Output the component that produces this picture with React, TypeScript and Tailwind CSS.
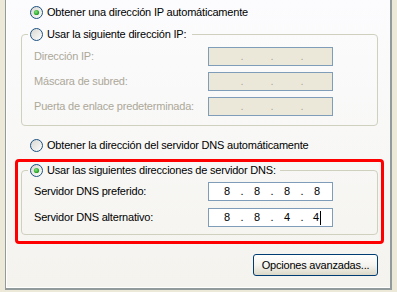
import React from "react";

function Radio({ checked }: { checked?: boolean }) {
  return (
    <svg width="13" height="13" viewBox="0 0 13 13" className="shrink-0">
      <defs>
        <linearGradient id="radioFill" x1="0" y1="0" x2="1" y2="1">
          <stop offset="0" stopColor="#d6d5cf" />
          <stop offset="1" stopColor="#ffffff" />
        </linearGradient>
        <radialGradient id="radioDot" cx="0.4" cy="0.4" r="0.6">
          <stop offset="0" stopColor="#7ce87a" />
          <stop offset="1" stopColor="#1f9a1f" />
        </radialGradient>
      </defs>
      <circle cx="6.5" cy="6.5" r="6" fill="url(#radioFill)" stroke="#1c5180" strokeWidth="1" />
      {checked && <circle cx="6.5" cy="6.5" r="2.6" fill="url(#radioDot)" />}
    </svg>
  );
}

function RadioRow({ label, checked }: { label: string; checked?: boolean }) {
  return (
    <div className="flex h-[15px] items-center gap-[4px] whitespace-nowrap">
      <Radio checked={checked} />
      <span>{label}</span>
    </div>
  );
}

function IpBox({ parts, disabled, cursor }: { parts: string[]; disabled?: boolean; cursor?: boolean }) {
  return (
    <div
      className={
        disabled
          ? "flex h-[19px] w-[125px] items-center border border-[#7f9db9] bg-[#ebe8da] pl-[5px] text-[#aca899]"
          : "flex h-[19px] w-[125px] items-center border border-[#7f9db9] bg-white pl-[5px] text-black"
      }
    >
      {parts.map((p, i) => (
        <React.Fragment key={i}>
          <span className="flex w-[26px] justify-center">
            {p}
            {cursor && i === 3 && <span className="ml-[1px] inline-block h-[14px] w-px bg-black" />}
          </span>
          {i < 3 && <span className="flex w-[4px] justify-center">.</span>}
        </React.Fragment>
      ))}
    </div>
  );
}

function Row({
  label,
  parts,
  disabled,
  cursor,
}: {
  label: string;
  parts: string[];
  disabled?: boolean;
  cursor?: boolean;
}) {
  return (
    <div className="flex h-[19px] items-center">
      <span className={disabled ? "w-[174px] text-[#aca899]" : "w-[174px]"}>{label}</span>
      <IpBox parts={parts} disabled={disabled} cursor={cursor} />
    </div>
  );
}

export default function App() {
  const empty = ["", "", "", ""];
  return (
    <div className="h-[292px] w-[397px] overflow-hidden bg-[#ece9d8] font-['Liberation_Sans',Arial,sans-serif] text-[11px] leading-[13px] tracking-[-0.2px] text-black">
      <div className="ml-[5px] h-[290px] w-[387px] border-r-2 border-b-2 border-l border-[#919b9c]">
        <div className="h-full border-b border-l border-white bg-gradient-to-b from-[#fcfcfe] to-[#f4f3ee]">
          <div className="pt-[5px] pl-[23px]">
            <RadioRow checked label="Obtener una dirección IP automáticamente" />
          </div>

          <fieldset className="mt-[7px] ml-[14px] w-[357px] rounded-[4px] border border-[#d0d0bf] pb-[9px] pl-[12px]">
            <legend className="-ml-[6px] pr-[6px] pl-[2px]">
              <RadioRow label="Usar la siguiente dirección IP:" />
            </legend>
            <div className="mt-[5px] flex flex-col gap-[6px]">
              <Row label="Dirección IP:" parts={empty} disabled />
              <Row label="Máscara de subred:" parts={empty} disabled />
              <Row label="Puerta de enlace predeterminada:" parts={empty} disabled />
            </div>
          </fieldset>

          <div className="mt-[12px] pl-[23px]">
            <RadioRow label="Obtener la dirección del servidor DNS automáticamente" />
          </div>

          <div className="mt-[6px] ml-[8px] w-[369px] rounded-[4px] border-[3px] border-[#ff0000] pb-[6px]">
            <fieldset className="mt-[1px] ml-[3px] w-[357px] rounded-[4px] border border-[#d0d0bf] pb-[7px] pl-[12px]">
              <legend className="-ml-[6px] pr-[4px] pl-[2px]">
                <RadioRow checked label="Usar las siguientes direcciones de servidor DNS:" />
              </legend>
              <div className="mt-[4px] flex flex-col gap-[7px]">
                <Row label="Servidor DNS preferido:" parts={["8", "8", "8", "8"]} />
                <Row label="Servidor DNS alternativo:" parts={["8", "8", "4", "4"]} cursor />
              </div>
            </fieldset>
          </div>

          <button className="mt-[10px] ml-[246px] flex h-[22px] w-[125px] items-center justify-center rounded-[3px] border border-[#003c74] bg-gradient-to-b from-white via-[#f5f4ef] to-[#dcd8c9]">
            Opciones avanzadas...
          </button>
        </div>
      </div>
    </div>
  );
}
